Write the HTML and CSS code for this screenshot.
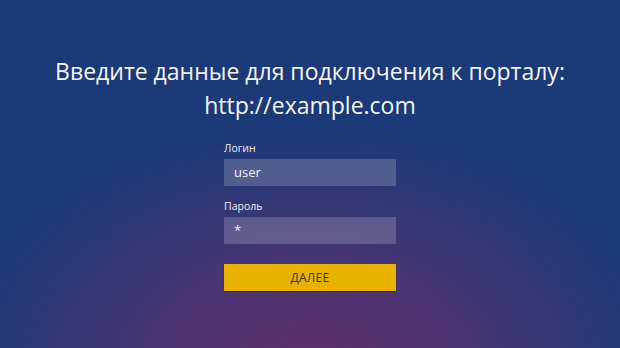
FILE: index.html
```html
<!DOCTYPE html>
<html lang="ru">
<head>
<meta charset="utf-8">
<link rel="stylesheet" href="styles.css">
</head>
<body>
<main class="screen">
  <h1 class="title">Введите данные для подключения к порталу:<br>http://example.com</h1>
  <form class="form">
    <label class="label">Логин</label>
    <div class="input">user</div>
    <label class="label label-2">Пароль</label>
    <div class="input">*</div>
    <button class="btn" type="button">ДАЛЕЕ</button>
  </form>
</main>
</body>
</html>
```
FILE: styles.css
```css
html, body {
  margin: 0;
  padding: 0;
}
body {
  width: 620px;
  height: 348px;
  overflow: hidden;
  font-family: "Open Sans", "Noto Sans", sans-serif;
  background: #1c3a78;
}
.screen {
  height: 348px;
  box-sizing: border-box;
  padding-top: 54px;
  display: flex;
  flex-direction: column;
  align-items: center;
  background: radial-gradient(ellipse 360px 250px at 50% 108%, #632d6c 0%, #4a3574 45%, #2a3876 80%, #1c3a78 100%);
}
.title {
  margin: 0;
  font-weight: 400;
  font-size: 23px;
  line-height: 34px;
  color: #f4f4f4;
  text-align: center;
}
.form {
  margin-top: 19px;
  width: 172px;
  display: flex;
  flex-direction: column;
}
.label {
  font-size: 10.5px;
  line-height: 14px;
  color: #eeeef4;
  margin-bottom: 4px;
}
.label-2 {
  margin-top: 13px;
}
.input {
  height: 27px;
  box-sizing: border-box;
  padding-left: 10px;
  background: rgba(255, 255, 255, 0.19);
  color: #f4f4f4;
  font-size: 13px;
  line-height: 27px;
}
.btn {
  margin-top: 20px;
  height: 27px;
  border: 0;
  padding: 0;
  background: #e8b100;
  color: #3a3222;
  font-family: inherit;
  font-size: 12px;
  letter-spacing: 0.3px;
  box-shadow: 0 1px 1px rgba(0, 0, 0, 0.45);
}
```
